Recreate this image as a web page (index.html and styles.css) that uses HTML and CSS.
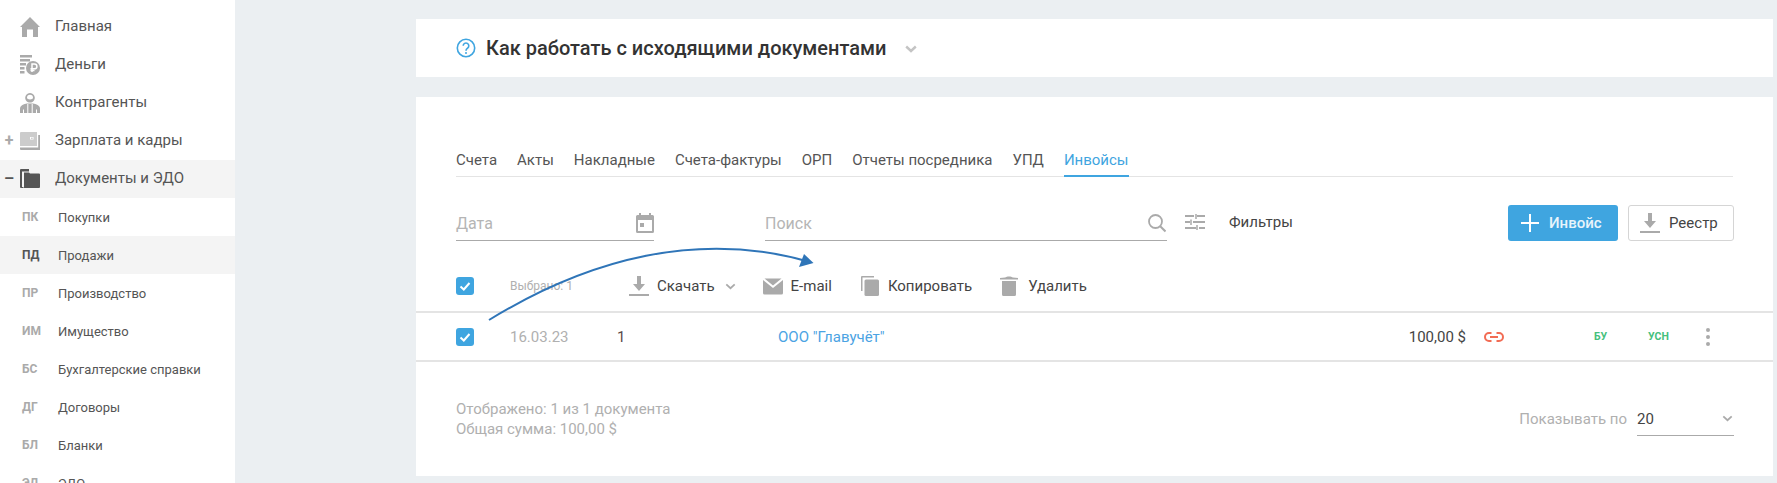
FILE: index.html
```html
<!DOCTYPE html>
<html lang="ru">
<head>
<meta charset="utf-8">
<title>Инвойсы</title>
<link rel="stylesheet" href="styles.css">
</head>
<body>
<div class="page">
  <nav class="sidebar">
    <a class="nav-row">
      <span class="sign"></span>
      <svg class="nav-icon" viewBox="0 0 20 20"><path d="M10 0L20 10H18V20H13V12.500H7V20H2V10H0Z"/></svg>
      <span class="nav-label">Главная</span>
    </a>
    <a class="nav-row">
      <span class="sign"></span>
      <svg class="nav-icon" viewBox="0 0 20 20"><path d="M0 0H12V2.500H0ZM0 4H10V6.500H0ZM0 8H6V10.500H0ZM0 12H4.500V14.500H0ZM0 16H4.500V18.500H0Z"/><circle cx="13" cy="13" r="7"/><path d="M12 17V9H14.500A2.300 2.300 0 0 1 14.500 13.800H10.500M10.500 15.500H14.500" fill="none" stroke="#fff" stroke-width="1.500"/></svg>
      <span class="nav-label">Деньги</span>
    </a>
    <a class="nav-row">
      <span class="sign"></span>
      <svg class="nav-icon" viewBox="0 0 20 20"><path d="M10 0A4.800 4.800 0 1 1 9.990 0ZM10 1.800A3 3 0 0 0 7 4.800C7 7 13 7 13 4.800A3 3 0 0 0 10 1.800Z" fill-rule="evenodd"/><path d="M0 20V15.500C0 12.500 4 11 7 10.500H13C16 11 20 12.500 20 15.500V20Z"/><path d="M7.800 11V20M12.200 11V20M3.500 16.500V20M16.500 16.500V20" stroke="#fff" stroke-width="1" fill="none"/></svg>
      <span class="nav-label">Контрагенты</span>
    </a>
    <a class="nav-row">
      <span class="sign">+</span>
      <svg class="nav-icon" viewBox="0 0 20 20"><path d="M1 1H17V15H0V2A1 1 0 0 1 1 1Z" fill="#ccc"/><path d="M18.200 4H20V19H1A1 1 0 0 1 0 18V16.500H18.200Z"/><rect x="10" y="6" width="3.500" height="2.500" fill="#fff"/><rect x="11.300" y="6.700" width="1.200" height="1.100"/></svg>
      <span class="nav-label">Зарплата и кадры</span>
    </a>
    <a class="nav-row nav-active">
      <span class="sign sign-dark">–</span>
      <svg class="nav-icon icon-dark" viewBox="0 0 20 20"><path d="M1 0H9V2.500H2V18H3.500V19H1A1 1 0 0 1 0 18V1A1 1 0 0 1 1 0Z"/><path d="M4 3.500H9L10 4.500H19A1 1 0 0 1 20 5.500V18A1 1 0 0 1 19 19H4Z"/></svg>
      <span class="nav-label">Документы и ЭДО</span>
    </a>
    <a class="sub-row"><b class="abbr">ПК</b><span>Покупки</span></a>
    <a class="sub-row sub-active"><b class="abbr">ПД</b><span>Продажи</span></a>
    <a class="sub-row"><b class="abbr">ПР</b><span>Производство</span></a>
    <a class="sub-row"><b class="abbr">ИМ</b><span>Имущество</span></a>
    <a class="sub-row"><b class="abbr">БС</b><span>Бухгалтерские справки</span></a>
    <a class="sub-row"><b class="abbr">ДГ</b><span>Договоры</span></a>
    <a class="sub-row"><b class="abbr">БЛ</b><span>Бланки</span></a>
    <a class="sub-row"><b class="abbr">ЭД</b><span>ЭДО</span></a>
  </nav>

  <main class="main">
    <section class="help-card">
      <svg class="help-icon" viewBox="0 0 20 20"><circle cx="10" cy="10" r="8.700" fill="none" stroke="#3fa5e0" stroke-width="1.600"/><path d="M7.200 7.800A2.800 2.800 0 1 1 11.500 10.200C10.500 10.900 10 11.300 10 12.800" fill="none" stroke="#3fa5e0" stroke-width="1.600"/><circle cx="10" cy="15" r="1" fill="#3fa5e0"/></svg>
      <h1 class="help-title">Как работать с исходящими документами</h1>
      <svg class="help-chevron" viewBox="0 0 12 8"><path d="M1.200 1.500L6 6L10.800 1.500" fill="none" stroke="#c4c4c4" stroke-width="2.400"/></svg>
    </section>

    <section class="docs-card">
      <div class="tabs">
        <a class="tab">Счета</a>
        <a class="tab">Акты</a>
        <a class="tab">Накладные</a>
        <a class="tab">Счета-фактуры</a>
        <a class="tab">ОРП</a>
        <a class="tab">Отчеты посредника</a>
        <a class="tab">УПД</a>
        <a class="tab tab-active">Инвойсы</a>
      </div>

      <div class="filters">
        <div class="field field-date">
          <span class="placeholder">Дата</span>
          <svg class="field-icon" viewBox="0 0 18 20"><path d="M3 0H5V2H13V0H15V2H16.500A1.500 1.500 0 0 1 18 3.500V18.500A1.500 1.500 0 0 1 16.500 20H1.500A1.500 1.500 0 0 1 0 18.500V3.500A1.500 1.500 0 0 1 1.500 2H3ZM2 7V18H16V7ZM4 10H8V14H4Z" fill-rule="evenodd"/></svg>
        </div>
        <div class="field field-search">
          <span class="placeholder">Поиск</span>
          <svg class="field-icon" viewBox="0 0 18 18"><circle cx="7.500" cy="7.500" r="6.500" fill="none" stroke="#aaa" stroke-width="1.800"/><path d="M12.200 12.200L17.500 17.500" stroke="#aaa" stroke-width="2"/></svg>
        </div>
        <svg class="sliders" viewBox="0 0 20 16"><path d="M0 2H9M12 2H20M0 8H5M8 8H20M0 14H11M14 14H20" stroke="#aaa" stroke-width="2" fill="none"/><path d="M11 0V5M6 5.500V11M12 11V16" stroke="#aaa" stroke-width="1.500" fill="none"/></svg>
        <span class="filters-label">Фильтры</span>
        <button class="btn btn-primary">
          <svg class="plus" viewBox="0 0 18 18"><path d="M0 9H18M9 0V18" stroke="#fff" stroke-width="2"/></svg>Инвойс
        </button>
        <button class="btn btn-outline">
          <svg class="dl-icon" viewBox="0 0 20 20"><path d="M8 0H12V8H16L10 15L4 8H8ZM0 18H20V20H0Z"/></svg>Реестр
        </button>
      </div>

      <div class="actions">
        <span class="check"><svg viewBox="0 0 18 18"><path d="M4.500 9.500L7.800 12.500L13.500 6" fill="none" stroke="#fff" stroke-width="2"/></svg></span>
        <span class="selected">Выбрано: 1</span>
        <svg class="act-icon act-download" viewBox="0 0 20 20"><path d="M8 0H12V8H16L10 15L4 8H8ZM0 18H20V20H0Z"/></svg>
        <span class="act-label">Скачать</span>
        <svg class="act-chevron" viewBox="0 0 12 8"><path d="M1.200 1.500L6 6L10.800 1.500" fill="none" stroke="#aaa" stroke-width="2"/></svg>
        <svg class="act-icon act-mail" viewBox="0 0 20 16"><path d="M1.500 0H18.500L10 7ZM0 1.500L10 9.500L20 1.500V14.500A1.500 1.500 0 0 1 18.500 16H1.500A1.500 1.500 0 0 1 0 14.500Z"/></svg>
        <span class="act-label">E-mail</span>
        <svg class="act-icon act-copy" viewBox="0 0 18 20"><path d="M1 0H13V1.500H1.500V15H0V1A1 1 0 0 1 1 0Z"/><path d="M5 3.500H16.500A1.500 1.500 0 0 1 18 5V18.500A1.500 1.500 0 0 1 16.500 20H5A1.500 1.500 0 0 1 3.500 18.500V5A1.500 1.500 0 0 1 5 3.500Z"/></svg>
        <span class="act-label">Копировать</span>
        <svg class="act-icon act-trash" viewBox="0 0 18 20"><path d="M5 1.500C7 0 11 0 13 1.500L18 2V3.500H0V2ZM2 5H16V18.500A1.500 1.500 0 0 1 14.500 20H3.500A1.500 1.500 0 0 1 2 18.500Z"/></svg>
        <span class="act-label">Удалить</span>
      </div>

      <div class="doc-row">
        <span class="check"><svg viewBox="0 0 18 18"><path d="M4.500 9.500L7.800 12.500L13.500 6" fill="none" stroke="#fff" stroke-width="2"/></svg></span>
        <span class="cell-date">16.03.23</span>
        <span class="cell-num">1</span>
        <a class="cell-name">ООО "Главучёт"</a>
        <span class="cell-sum">100,00 $</span>
        <svg class="cell-link" viewBox="0 0 20 10"><path d="M7.500 1H5A4 4 0 0 0 5 9H7.500M12.500 1H15A4 4 0 0 1 15 9H12.500" fill="none" stroke="#f26c54" stroke-width="2"/><path d="M6 5H14" stroke="#f26c54" stroke-width="2"/></svg>
        <b class="tag tag-bu">БУ</b>
        <b class="tag tag-usn">УСН</b>
        <span class="dots"><i></i><i></i><i></i></span>
      </div>

      <footer class="docs-footer">
        <div class="summary">
          <div>Отображено: 1 из 1 документа</div>
          <div>Общая сумма: 100,00 $</div>
        </div>
        <span class="per-page">Показывать по</span>
        <div class="select">
          <span>20</span>
          <svg class="select-chevron" viewBox="0 0 12 8"><path d="M1.200 1.500L6 6L10.800 1.500" fill="none" stroke="#aaa" stroke-width="2"/></svg>
        </div>
      </footer>
    </section>
  </main>

  <svg class="arrow" viewBox="0 0 1777 483"><path d="M489 320C590 258 700 230 810 262" fill="none" stroke="#2f75b8" stroke-width="2"/><path d="M813.500 263L799 267L804 254Z" fill="#2f75b8"/></svg>
</div>
</body>
</html>
```
FILE: styles.css
```css
* { box-sizing: border-box; }
html, body { margin: 0; height: 100%; overflow: hidden; }
body { font-family: Roboto, "Liberation Sans", sans-serif; background: #ebeff2; color: #333; }
.page { display: flex; height: 483px; width: 1777px; overflow: hidden; position: relative; }

.sidebar { width: 235px; flex: none; background: #fff; padding-top: 8px; height: 483px; overflow: hidden; }
.nav-row { display: flex; align-items: center; height: 38px; color: #555; font-size: 15px; }
.nav-active { background: #f4f4f4; }
.sign { width: 18px; margin-right: 2px; text-align: center; font-size: 16px; font-weight: 700; color: #aaa; line-height: 1; }
.sign-dark { color: #555; }
.nav-icon { width: 20px; height: 20px; fill: #aaa; }
.icon-dark { fill: #555; }
.nav-label { margin-left: 15px; padding-bottom: 2px; }
.sub-row { display: flex; align-items: center; height: 38px; font-size: 13px; color: #555; padding-left: 22px; }
.abbr { width: 36px; font-size: 12px; font-weight: 700; color: #aaa; }
.sub-active { background: #f4f4f4; }
.sub-active .abbr { color: #555; }

.main { width: 1357px; margin-left: 181px; flex: none; padding-top: 19px; }
.help-card { height: 58px; background: #fff; display: flex; align-items: center; padding-left: 40px; }
.help-icon { width: 20px; height: 20px; }
.help-title { margin: 0 0 0 10px; font-size: 20px; font-weight: 500; color: #333; line-height: 1; }
.help-chevron { width: 12px; height: 8px; margin-left: 18px; margin-top: 1px; }

.docs-card { margin-top: 20px; height: 379px; background: #fff; }
.tabs { margin: 0 40px; padding-top: 50px; height: 80px; display: flex; gap: 20px; border-bottom: 1px solid #e4e4e4; }
.tab { font-size: 15px; height: 30px; line-height: 26px; color: #555; }
.tab-active { color: #3fa5e0; border-bottom: 2px solid #3fa5e0; }

.filters { display: flex; align-items: flex-end; margin: 0 39px 0 40px; height: 64px; position: relative; }
.field { height: 36px; border-bottom: 1px solid #aaa; display: flex; align-items: center; justify-content: space-between; padding-top: 2px; }
.field-date { width: 198px; }
.field-search { width: 402px; margin-left: 111px; padding-right: 1px; }
.placeholder { font-size: 16px; color: #b5b5b5; }
.field-icon { width: 18px; height: 20px; fill: #aaa; margin-bottom: 2px; }
.sliders { width: 20px; height: 16px; margin-left: 18px; margin-bottom: 11px; }
.filters-label { font-size: 15px; color: #444; margin-left: 24px; margin-bottom: 10px; }
.btn { height: 36px; border-radius: 3px; font-family: inherit; font-size: 15px; display: flex; align-items: center; padding: 0; }
.btn-primary { width: 110px; margin-left: auto; background: #3fa5e0; border: 0; color: #e8f4fb; font-weight: 500; padding-left: 13px; }
.plus { width: 18px; height: 18px; margin-right: 10px; }
.btn-outline { width: 106px; margin-left: 10px; background: #fff; border: 1px solid #d5d5d5; color: #444; padding-left: 11px; }
.dl-icon { width: 20px; height: 20px; fill: #aaa; margin-right: 9px; }

.actions { height: 72px; display: flex; align-items: center; padding: 20px 40px 0; border-bottom: 2px solid #e4e4e4; }
.check { width: 18px; height: 18px; border-radius: 3px; background: #3fa5e0; flex: none; display: block; }
.check svg { display: block; width: 18px; height: 18px; }
.selected { font-size: 12px; color: #b0b0b0; margin-left: 36px; width: 119px; }
.act-icon { fill: #aaa; flex: none; }
.act-label { font-size: 15px; color: #444; }
.act-download { width: 20px; height: 20px; margin-right: 8px; }
.act-chevron { width: 11px; height: 7px; margin-left: 10px; }
.act-mail { width: 20px; height: 17px; margin-left: 27px; margin-right: 8px; }
.act-copy { width: 18px; height: 20px; margin-left: 29px; margin-right: 9px; }
.act-trash { width: 18px; height: 20px; margin-left: 28px; margin-right: 10px; }

.doc-row { height: 49px; display: flex; align-items: center; padding: 0 40px; border-bottom: 2px solid #e4e4e4; font-size: 15px; position: relative; }
.cell-date { font-size: 15px; color: #b0b0b0; margin-left: 36px; width: 107px; }
.cell-num { font-size: 15px; width: 161px; color: #5a4a4a; }
.cell-name { color: #4ba3e3; width: 400px; }
.cell-sum { font-size: 15px; color: #444; margin-left: auto; width: 285px; text-align: right; }
.cell-link { width: 20px; height: 10px; margin-left: 18px; }
.tag { font-size: 10.500px; font-weight: 700; color: #45c07c; }
.tag-bu { margin-left: 90px; width: 54px; }
.tag-usn { width: 58px; }
.dots { display: flex; flex-direction: column; gap: 3px; margin-right: 23px; }
.dots i { display: block; width: 4px; height: 4px; border-radius: 50%; background: #aaa; }

.docs-footer { display: flex; align-items: center; padding: 0 39px 0 40px; height: 114px; font-size: 15px; color: #b0b0b0; }
.summary { line-height: 20px; margin-right: auto; }
.per-page { font-size: 15px; margin-right: 10px; }
.select { width: 97px; height: 32px; border-bottom: 1px solid #aaa; display: flex; justify-content: space-between; align-items: center; font-size: 15px; color: #444; padding: 0 1px 2px 0; margin-top: 2px; }
.select-chevron { width: 11px; height: 7px; }

.arrow { position: absolute; left: 0; top: 0; width: 1777px; height: 483px; pointer-events: none; }
```
